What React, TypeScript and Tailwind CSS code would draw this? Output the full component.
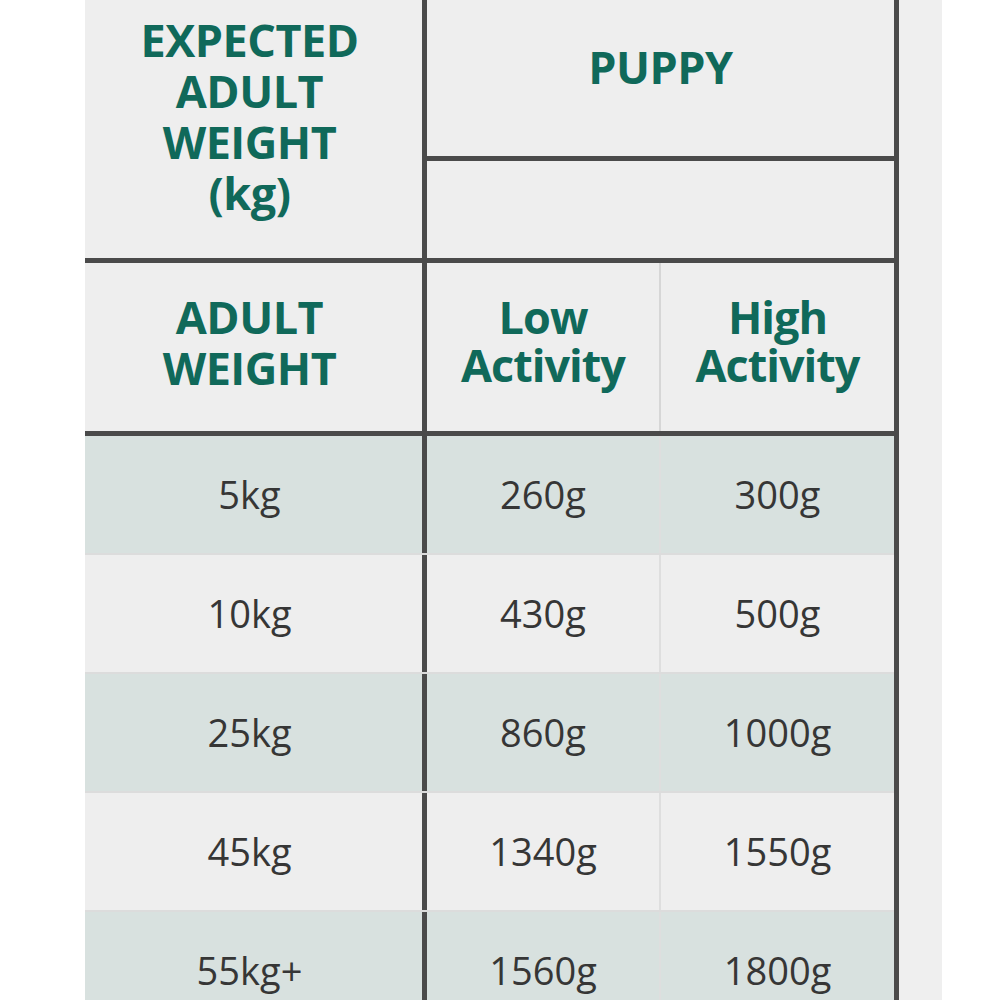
import React from "react";

const font = { fontFamily: '"Open Sans", "Noto Sans", sans-serif' };

const rows: { w: string; lo: string; hi: string; shade: boolean }[] = [
  { w: "5kg", lo: "260g", hi: "300g", shade: true },
  { w: "10kg", lo: "430g", hi: "500g", shade: false },
  { w: "25kg", lo: "860g", hi: "1000g", shade: true },
  { w: "45kg", lo: "1340g", hi: "1550g", shade: false },
  { w: "55kg+", lo: "1560g", hi: "1800g", shade: true },
];

export default function App() {
  return (
    <div className="flex w-[1000px] h-[1000px] overflow-hidden bg-white" style={font}>
      <div className="w-[85px] shrink-0 bg-white" />
      <div className="w-[814px] shrink-0 flex flex-col border-r-[5px] border-[#4a4a4a] bg-[#eeeeee]">
        {/* top header */}
        <div className="flex h-[258px] shrink-0">
          <div className="w-[337px] shrink-0 flex flex-col items-center pt-[14px] pr-[8px] text-[45px] leading-[51px] font-bold text-[#10695a] text-center tracking-[-0.5px]">
            <span>EXPECTED</span>
            <span>ADULT</span>
            <span>WEIGHT</span>
            <span>(kg)</span>
          </div>
          <div className="w-[5px] shrink-0 bg-[#4a4a4a]" />
          <div className="flex-1 flex flex-col">
            <div className="h-[156px] shrink-0 flex justify-center pt-[41px] text-[45px] leading-[51px] font-bold text-[#10695a] tracking-[-0.5px]">
              PUPPY
            </div>
            <div className="h-[5px] shrink-0 bg-[#4a4a4a]" />
            <div className="flex-1" />
          </div>
        </div>
        <div className="h-[5px] shrink-0 bg-[#4a4a4a]" />
        {/* second header */}
        <div className="flex h-[168px] shrink-0">
          <div className="w-[337px] shrink-0 flex flex-col items-center pt-[28px] pr-[8px] text-[45px] leading-[51px] font-bold text-[#10695a] text-center tracking-[-0.5px]">
            <span>ADULT</span>
            <span>WEIGHT</span>
          </div>
          <div className="w-[5px] shrink-0 bg-[#4a4a4a]" />
          <div className="w-[232px] shrink-0 flex flex-col items-center pt-[30px] text-[45px] leading-[48px] font-bold text-[#10695a] text-center tracking-[-1px]">
            <span>Low</span>
            <span>Activity</span>
          </div>
          <div className="w-[2px] shrink-0 bg-[#d6d6d6]" />
          <div className="flex-1 flex flex-col items-center pt-[30px] text-[45px] leading-[48px] font-bold text-[#10695a] text-center tracking-[-1px]">
            <span>High</span>
            <span>Activity</span>
          </div>
        </div>
        <div className="h-[5px] shrink-0 bg-[#4a4a4a]" />
        {/* data rows */}
        {rows.map((r, i) => (
          <React.Fragment key={r.w}>
            {i > 0 && <div className="h-[2px] shrink-0 bg-[#dcdcdc]" />}
            <div className={`flex h-[117px] shrink-0 text-[38px] leading-[38px] text-[#363636] ${r.shade ? "bg-[#d8e1df]" : "bg-[#eeeeee]"}`}>
              <div className="w-[337px] shrink-0 flex items-center justify-center pb-[2px] pr-[8px]">{r.w}</div>
              <div className="w-[5px] shrink-0 bg-[#4a4a4a]" />
              <div className="w-[232px] shrink-0 flex items-center justify-center pb-[2px]">{r.lo}</div>
              <div className="w-[2px] shrink-0 bg-[#dedede]" />
              <div className="flex-1 flex items-center justify-center pb-[2px]">{r.hi}</div>
            </div>
          </React.Fragment>
        ))}
      </div>
      <div className="w-[43px] shrink-0 bg-[#efefef]" />
      <div className="flex-1 bg-white" />
    </div>
  );
}
